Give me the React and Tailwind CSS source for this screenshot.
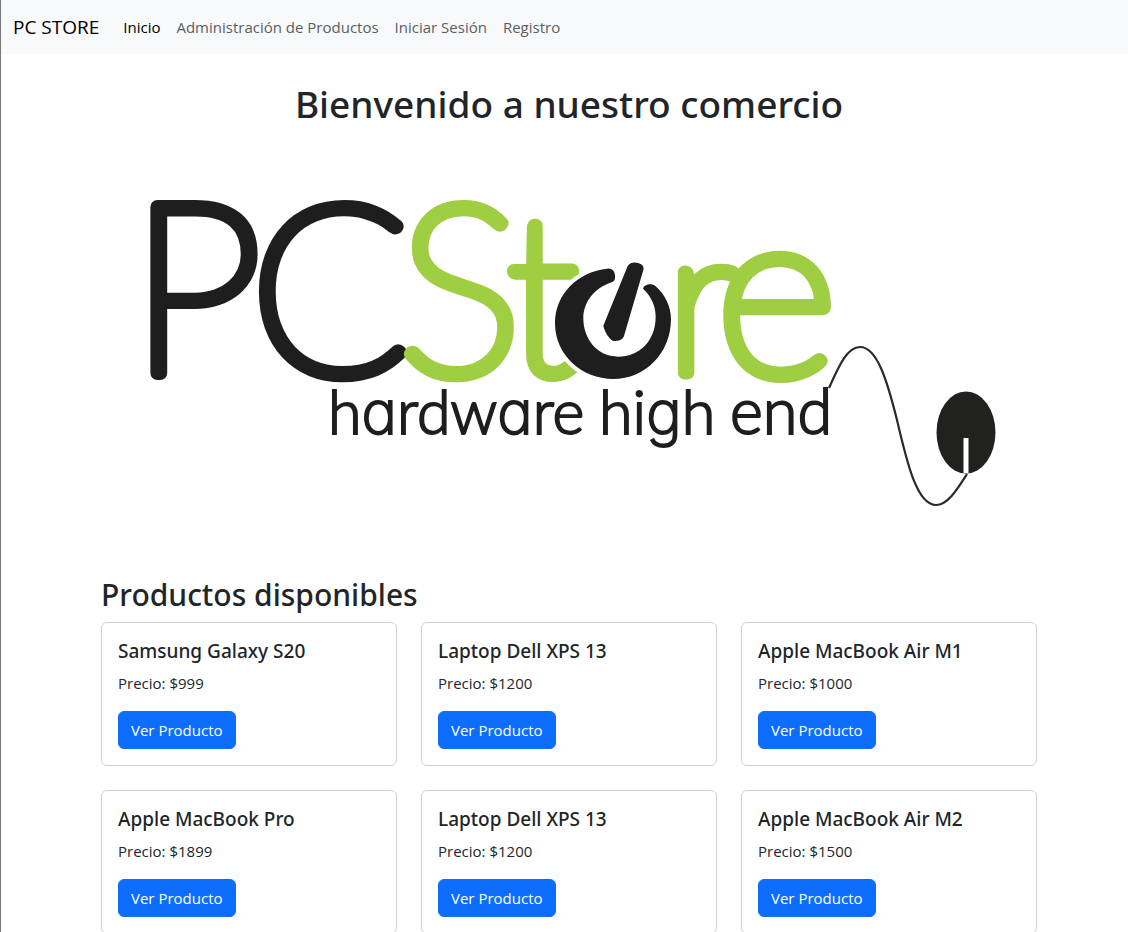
const navLinks = [
  { label: "Inicio", active: true },
  { label: "Administración de Productos" },
  { label: "Iniciar Sesión" },
  { label: "Registro" },
];

const products = [
  { name: "Samsung Galaxy S20", price: 999 },
  { name: "Laptop Dell XPS 13", price: 1200 },
  { name: "Apple MacBook Air M1", price: 1000 },
  { name: "Apple MacBook Pro", price: 1899 },
  { name: "Laptop Dell XPS 13", price: 1200 },
  { name: "Apple MacBook Air M2", price: 1500 },
];

function Navbar() {
  return (
    <nav className="flex flex-wrap items-center bg-[#f8f9fa] px-3 py-2">
      <a href="#" className="mr-6 text-[19px] leading-[38px] text-black">
        PC STORE
      </a>
      <ul className="flex flex-wrap gap-4 text-[15px] leading-6">
        {navLinks.map((link) => (
          <li key={link.label}>
            <a href="#" className={link.active ? "text-black" : "text-[#5c5d5e]"}>
              {link.label}
            </a>
          </li>
        ))}
      </ul>
    </nav>
  );
}

// Round single-storey letter shapes for the tagline.
function Round({ children }) {
  return (
    <tspan className="font-['Inter'] font-extralight [font-feature-settings:'cv11']" fontSize="60">
      {children}
    </tspan>
  );
}

const powerRing =
  "M622 296C535 305 465 370 465 460C465 555 545 627 640 627C735 627 813 550 813 447C813 410 795 372 766 348C755 338 732 342 729 356C755 380 767 410 767 440C767 515 715 560 655 560C590 560 550 505 550 445C550 400 580 355 635 337C645 333 645 328 645 318C645 303 635 294 622 296Z";

function Logo() {
  return (
    <svg
      viewBox="101 136 936 424"
      className="block w-full font-['Lato',sans-serif]"
      role="img"
      aria-label="PC Store hardware high end"
    >
      <g fontWeight="100" strokeWidth="14" strokeLinejoin="round">
        <g fill="#1e1e1e" stroke="#1e1e1e">
          <text x="130" y="373" fontSize="236">P</text>
          <text x="250" y="374" fontSize="234">C</text>
        </g>
        <g fill="#a0ce42" stroke="#a0ce42">
          <text x="398" y="374" fontSize="234">S</text>
          <text x="507" y="373" fontSize="218">t</text>
          <text x="666" y="373" fontSize="205">r</text>
          <text x="716" y="375" fontSize="234">e</text>
        </g>
      </g>
      <g transform="translate(400 170) scale(0.33333)" fill="#1e1e1e">
        <path d={powerRing} stroke="#fff" strokeWidth="24" />
        <path d={powerRing} />
        <path d="M683 288C690 276 705 276 715 279C728 284 733 290 730 300L672 498C668 512 650 514 638 512C625 505 612 480 610 467Z" />
      </g>
      <g fill="#1e1e1e" stroke="#1e1e1e" strokeWidth="2" fontSize="61" fontWeight="300">
        <text x="328" y="434">
          h<Round>a</Round>rdw<Round>a</Round>re
        </text>
        <text x="599" y="434">
          hi<Round>g</Round>h
        </text>
        <text x="730" y="434" fontSize="63">end</text>
      </g>
      <path
        d="M829 388C840 363 848 347 860 347C877 347 887 380 897 420C907 463 917 505 936 505C948 505 958 488 967 474"
        fill="none"
        stroke="#2a2a2a"
        strokeWidth="2.2"
      />
      <ellipse cx="966" cy="432.500" rx="29.500" ry="41" fill="#21211f" />
      <rect x="963.500" y="438" width="5" height="35" fill="#fff" />
    </svg>
  );
}

function ProductCard({ product }) {
  return (
    <article className="rounded-md border border-[#d0d1d2] bg-white p-4">
      <h3 className="mb-2 font-['Noto_Sans',sans-serif] text-[19px] font-medium leading-6">
        {product.name}
      </h3>
      <p className="mb-4 text-[15px] leading-6">Precio: ${product.price}</p>
      <a
        href="#"
        className="inline-block rounded-md border border-[#0d6efd] bg-[#0d6efd] px-3 py-1.5 align-top text-[15px] leading-6 text-white"
      >
        Ver Producto
      </a>
    </article>
  );
}

export default function App() {
  return (
    <div className="min-h-screen border-l border-[#77777a] bg-white font-['Open_Sans','Noto_Sans',sans-serif] text-[#212529]">
      <Navbar />
      <div className="pl-[9px]">
        <main className="mx-auto max-w-[960px] px-3 pt-[26px]">
          <h1 className="mb-2 text-center font-['Noto_Sans',sans-serif] text-[37px] font-medium leading-[48px]">
            Bienvenido a nuestro comercio
          </h1>
          <Logo />
          <h2 className="mb-2 mt-4 font-['Noto_Sans',sans-serif] text-[30px] font-medium leading-[38px]">
            Productos disponibles
          </h2>
          <div className="grid grid-cols-1 gap-6 sm:grid-cols-2 md:grid-cols-3">
            {products.map((product, index) => (
              <ProductCard key={index} product={product} />
            ))}
          </div>
        </main>
      </div>
    </div>
  );
}
